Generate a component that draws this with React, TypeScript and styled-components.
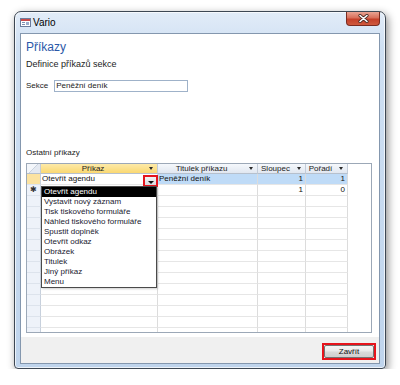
import styled, { createGlobalStyle } from 'styled-components';

const GlobalStyle = createGlobalStyle`
  body {
    margin: 0;
    background: #fff;
    font-family: "Liberation Sans", Arial, sans-serif;
    color: #1a1a1a;
  }
`

const Page = styled.div`
  padding: 11px 0 0 14px;
`

const Window = styled.div`
  box-sizing: border-box;
  width: 372px;
  height: 358px;
  border: 1px solid #3d4753;
  border-radius: 7px 7px 4px 4px;
  background: linear-gradient(180deg, #e2ecf8 0%, #cfe0f3 10%, #bfd4ec 100%);
  box-shadow: 2px 3px 8px rgba(0, 0, 0, 0.45), inset 0 0 0 1px rgba(255, 255, 255, 0.7);
  padding: 0 5px 4px;
  display: flex;
  flex-direction: column;
`

const TitleBar = styled.div`
  height: 21px;
  display: flex;
  align-items: center;
  gap: 2px;
`

const Title = styled.span`
  font-size: 10px;
  line-height: 12px;
  color: #000;
`

const CloseButton = styled.div`
  box-sizing: border-box;
  margin-left: auto;
  align-self: flex-start;
  width: 34px;
  height: 14px;
  border: 1px solid #7a2b20;
  border-top: none;
  border-radius: 0 0 4px 4px;
  background: linear-gradient(180deg, #e9a493 0%, #d86f5a 45%, #c4402a 55%, #cf5a3e 100%);
  display: flex;
  align-items: center;
  justify-content: center;
`

const Client = styled.div`
  flex: 1;
  border: 1px solid #8497ae;
  background: #fff;
  display: flex;
  flex-direction: column;
  overflow: hidden;
`

const Content = styled.div`
  flex: 1;
  padding: 6px 7px 0 5px;
  display: flex;
  flex-direction: column;
`

const Heading = styled.div`
  font-size: 12px;
  line-height: 14px;
  color: #2b58a8;
`

const SubHeading = styled.div`
  margin-top: 5px;
  font-size: 9px;
  line-height: 11px;
  color: #1c1c1c;
`

const FieldRow = styled.div`
  margin-top: 10px;
  display: flex;
  align-items: center;
  gap: 6px;
`

const Label = styled.span`
  font-size: 8px;
  line-height: 10px;
`

const Input = styled.div`
  box-sizing: border-box;
  width: 134px;
  height: 12px;
  border: 1px solid #9fb2c9;
  font-size: 8px;
  line-height: 10px;
  padding-left: 1px;
`

const SectionLabel = styled.div`
  margin-top: 56px;
  font-size: 8px;
  line-height: 10px;
`

const Grid = styled.div`
  box-sizing: border-box;
  margin-top: 5px;
  width: 346px;
  height: 170px;
  border: 1px solid #9ca8b7;
  position: relative;
  overflow: hidden;
  display: grid;
  grid-template-columns: 14px 117px 100px 48px 42px 1fr;
  grid-template-rows: 10px;
  grid-auto-rows: 11px;
  font-size: 8px;
`

const HeadCell = styled.div<{ $active?: boolean; $blank?: boolean }>`
  box-sizing: border-box;
  display: flex;
  align-items: center;
  border-right: ${p => (p.$blank ? 'none' : '1px solid #c3ccd8')};
  border-bottom: ${p => (p.$blank ? 'none' : '1px solid #b6c0cd')};
  background: ${p =>
    p.$blank
      ? '#fff'
      : p.$active
        ? 'linear-gradient(180deg, #fdeaa8 0%, #fad872 100%)'
        : 'linear-gradient(180deg, #f5f8fc 0%, #e1e7f0 100%)'};
  line-height: 9px;
  color: #222;
`

const HeadText = styled.span`
  flex: 1;
  text-align: center;
`

const HeadArrow = styled.span`
  width: 12px;
  display: flex;
  justify-content: center;
  &::after {
    content: '';
    border-left: 2.5px solid transparent;
    border-right: 2.5px solid transparent;
    border-top: 3px solid #2a2a2a;
  }
`

const Corner = styled(HeadCell)`
  background: linear-gradient(135deg, #f3f6fa 0%, #f3f6fa 48%, #c9d2de 50%, #e4e9f1 52%, #e4e9f1 100%);
`

const Selector = styled.div<{ $current?: boolean }>`
  box-sizing: border-box;
  border-right: 1px solid #c7d0dc;
  border-bottom: 1px solid #dde3ec;
  background: ${p => (p.$current ? '#fce3a1' : '#eef2f9')};
  display: flex;
  align-items: center;
  justify-content: center;
  font-size: 8px;
  line-height: 10px;
  color: #333;
`

const Cell = styled.div<{ $selected?: boolean; $right?: boolean; $blank?: boolean }>`
  box-sizing: border-box;
  border-right: ${p => (p.$blank ? 'none' : '1px solid #dcdcdc')};
  border-bottom: ${p => (p.$blank ? 'none' : '1px solid #e6e6e6')};
  background: ${p => (p.$selected ? '#bfdbf7' : '#fff')};
  text-align: ${p => (p.$right ? 'right' : 'left')};
  padding: 0 2px 0 1px;
  line-height: 10px;
  white-space: nowrap;
  overflow: hidden;
  color: #111;
`

const ComboButton = styled.div`
  box-sizing: border-box;
  position: absolute;
  left: 116px;
  top: 11px;
  width: 15px;
  height: 12px;
  border: 2px solid #e4151d;
  background: linear-gradient(180deg, #f4f4f4 0%, #d6d9de 100%);
  display: flex;
  align-items: center;
  justify-content: center;
  &::after {
    content: '';
    margin-top: 2px;
    border-left: 3px solid transparent;
    border-right: 3px solid transparent;
    border-top: 3px solid #111;
  }
`

const DropList = styled.div`
  box-sizing: border-box;
  position: absolute;
  left: 14px;
  top: 22px;
  width: 116px;
  height: 102px;
  border: 1px solid #4a4a4a;
  background: #fff;
  box-shadow: 1px 1px 2px rgba(0, 0, 0, 0.2);
`

const DropItem = styled.div<{ $highlight?: boolean }>`
  height: 10px;
  line-height: 10px;
  padding-left: 2px;
  font-size: 8px;
  background: ${p => (p.$highlight ? '#000' : 'transparent')};
  color: ${p => (p.$highlight ? '#fff' : '#1a1a30')};
  white-space: nowrap;
`

const Footer = styled.div`
  height: 26px;
  background: #f0f0f0;
  display: flex;
  align-items: center;
  justify-content: flex-end;
  padding-right: 3px;
`

const Highlight = styled.div`
  box-sizing: border-box;
  width: 54px;
  height: 17px;
  border: 2px solid #e6141c;
  margin-top: 2px;
  display: flex;
`

const Button = styled.div`
  flex: 1;
  border: 1px solid #737373;
  border-radius: 2px;
  background: linear-gradient(180deg, #f6f6f6 0%, #e9e9e9 48%, #dadada 52%, #cfcfcf 100%);
  font-size: 8px;
  line-height: 11px;
  text-align: center;
  color: #111;
`

const commands = [
  'Otevřít agendu',
  'Vystavit nový záznam',
  'Tisk tiskového formuláře',
  'Náhled tiskového formuláře',
  'Spustit doplněk',
  'Otevřít odkaz',
  'Obrázek',
  'Titulek',
  'Jiný příkaz',
  'Menu',
]

const AppIcon = () => (
  <svg width="11" height="9" viewBox="0 0 11 9">
    <rect x="0.5" y="0.5" width="10" height="8" fill="#fff" stroke="#6b7c9c" />
    <rect x="1" y="1" width="9" height="2" fill="#c84a4a" />
    <rect x="2" y="4" width="3" height="1" fill="#7d8fb0" />
    <rect x="2" y="6" width="3" height="1" fill="#7d8fb0" />
    <rect x="6" y="4" width="3" height="3" fill="#9aaccb" />
  </svg>
)

const CloseIcon = () => (
  <svg width="11" height="9" viewBox="0 0 11 9">
    <path d="M2 1.5 L9 7.5 M9 1.5 L2 7.5" stroke="#4a2a24" strokeWidth="3.2" strokeLinecap="round" />
    <path d="M2 1.5 L9 7.5 M9 1.5 L2 7.5" stroke="#fff" strokeWidth="1.6" strokeLinecap="round" />
  </svg>
)

const App = () => {
  const emptyRows = Array.from({ length: 14 })

  return (
    <Page>
      <GlobalStyle />
      <Window>
        <TitleBar>
          <AppIcon />
          <Title>Vario</Title>
          <CloseButton><CloseIcon /></CloseButton>
        </TitleBar>
        <Client>
          <Content>
            <Heading>Příkazy</Heading>
            <SubHeading>Definice příkazů sekce</SubHeading>
            <FieldRow>
              <Label>Sekce</Label>
              <Input>Peněžní deník</Input>
            </FieldRow>
            <SectionLabel>Ostatní příkazy</SectionLabel>
            <Grid>
              <Corner />
              <HeadCell $active><HeadText>Příkaz</HeadText><HeadArrow /></HeadCell>
              <HeadCell><HeadText>Titulek příkazu</HeadText><HeadArrow /></HeadCell>
              <HeadCell><HeadText>Sloupec</HeadText><HeadArrow /></HeadCell>
              <HeadCell><HeadText>Pořadí</HeadText><HeadArrow /></HeadCell>
              <HeadCell $blank />

              <Selector $current />
              <Cell>Otevřít agendu</Cell>
              <Cell $selected>Peněžní deník</Cell>
              <Cell $selected $right>1</Cell>
              <Cell $selected $right>1</Cell>
              <Cell $blank />

              <Selector>✱</Selector>
              <Cell />
              <Cell />
              <Cell $right>1</Cell>
              <Cell $right>0</Cell>
              <Cell $blank />

              {emptyRows.map((_, i) => [
                <Selector key={`s${i}`} />,
                <Cell key={`a${i}`} />,
                <Cell key={`b${i}`} />,
                <Cell key={`c${i}`} />,
                <Cell key={`d${i}`} />,
                <Cell key={`e${i}`} $blank />,
              ])}

              <ComboButton />
              <DropList>
                {commands.map((c, i) => (
                  <DropItem key={c} $highlight={i === 0}>{c}</DropItem>
                ))}
              </DropList>
            </Grid>
          </Content>
          <Footer>
            <Highlight><Button>Zavřít</Button></Highlight>
          </Footer>
        </Client>
      </Window>
    </Page>
  )
}

export default App
